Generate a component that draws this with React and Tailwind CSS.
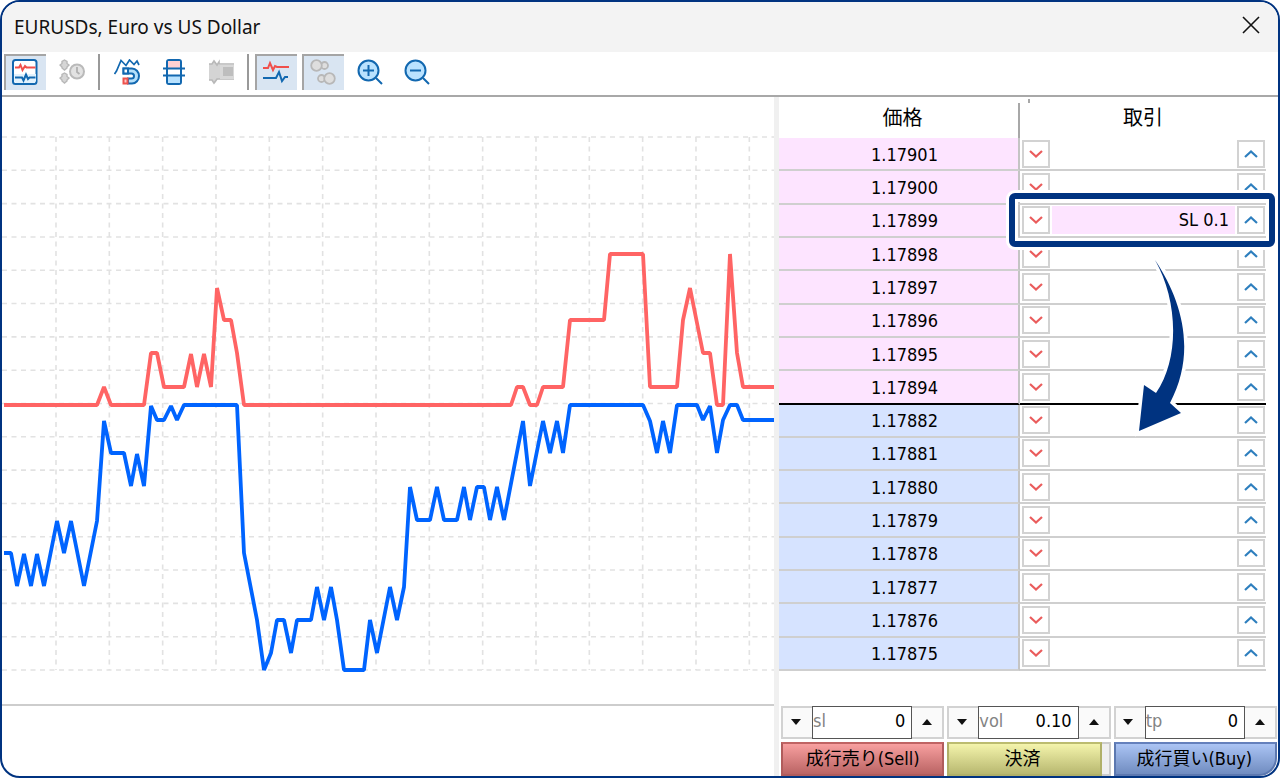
import { useState } from 'react';

const ASKS = ['1.17901', '1.17900', '1.17899', '1.17898', '1.17897', '1.17896', '1.17895', '1.17894'];
const BIDS = ['1.17882', '1.17881', '1.17880', '1.17879', '1.17878', '1.17877', '1.17876', '1.17875'];
const ORDERS = { '1.17899': 'SL 0.1' };

const ASK_LINE =
  '4,405 97,405 104,387 111,405 144,405 151,353 157,353 164,387 184,387 191,354 197,387 204,354 211,387 217,288 224,320 231,320 237,353 244,405 511,405 517,387 523,387 530,405 537,405 543,387 563,387 570,320 604,320 610,254 643,254 650,387 677,387 683,320 690,288 703,353 710,353 717,405 723,405 730,254 737,353 743,387 774,387';
const BID_LINE =
  '4,553 11,553 17,586 24,554 31,586 37,554 44,586 57,521 64,553 71,521 84,586 97,521 104,421 111,453 124,453 131,486 137,454 144,486 151,406 157,420 164,420 171,406 177,420 184,405 237,405 244,553 257,620 264,670 271,653 277,620 284,620 291,653 297,620 311,620 317,587 324,620 331,587 337,620 344,670 364,670 370,620 377,653 390,587 397,620 404,587 410,487 417,520 430,520 437,487 444,520 457,520 464,487 470,520 477,487 484,487 490,520 497,487 504,520 523,421 530,486 543,421 550,453 557,421 563,453 570,405 643,405 650,421 657,453 663,421 670,453 677,405 697,405 703,420 710,406 717,453 723,420 730,405 737,405 743,420 774,420';

const NUM_FONT = "font-['DejaVu_Sans_Condensed','DejaVu_Sans','Noto_Sans_CJK_JP',sans-serif]";

function TickChart() {
  const rows = Array.from({ length: 17 }, (_, i) => 137 + (i * 533) / 16);
  const cols = Array.from({ length: 14 }, (_, i) => 56 + (i * 160) / 3);
  return (
    <svg viewBox="2 97 772 607" preserveAspectRatio="none" className="block h-[607px] w-full" aria-label="Tick chart">
      <g stroke="#e2e2e2" strokeWidth="1.6" strokeDasharray="5 4.5">
        {rows.map((y) => <line key={y} x1="2" x2="774" y1={y} y2={y} />)}
        {cols.map((x) => <line key={x} x1={x} x2={x} y1="137" y2="670" />)}
      </g>
      <g fill="none" strokeWidth="3.8" strokeLinejoin="bevel">
        <polyline points={BID_LINE} stroke="#0064ff" />
        <polyline points={ASK_LINE} stroke="#ff6464" />
      </g>
    </svg>
  );
}

/* Toolbar icons, all on a 26px grid */
function Icon({ children }) {
  return (
    <svg viewBox="0 0 26 26" className="size-[26px]" fill="none" strokeWidth="2" aria-hidden="true">
      {children}
    </svg>
  );
}

const icons = {
  panel: (
    <Icon>
      <rect x="1" y="1" width="23.5" height="24" rx="2.5" fill="#fff" stroke="#1268b0" />
      <path d="M2 15h22v7l-2 2H4l-2-2z" fill="#e2f2fd" />
      <path d="M3 8.5h4L8.5 6l2 5L13 7l1.5 1.5h9" stroke="#f0504c" />
      <path d="M3 18.5h7l1.5 3 2.5-6 2 4.5 1.5-1.5h6" stroke="#1268b0" />
    </Icon>
  ),
  history: (
    <Icon>
      <path
        d="M5.5 1 8 2.5v2L10 6 8 8v1l-2.500 2L3 9V8L1 6l2-1.500v-2zM5.5 14 8 15.5v2l2 1.500-2 2v1L5.5 24 3 22v-1l-2-2 2-1.500v-2z"
        fill="#d6d6d6"
        stroke="#b8b8b8"
        strokeWidth="1.4"
      />
      <circle cx="18" cy="12.5" r="7" fill="#e2e2e2" stroke="#bababa" />
      <path d="M18 8v5l2.5 2" stroke="#b0b0b0" strokeWidth="1.8" />
    </Icon>
  ),
  magnet: (
    <Icon>
      <path d="M.5 15l2-3L7 1.5l5 5L15.5 1 20 5.5 23 2l2 4" stroke="#1268b0" strokeWidth="1.7" />
      <path d="M9.5 9.5H18a7 7.5 0 0 1 0 15h-4v-5h3.5a2.5 2.5 0 0 0 0-5h-8z" fill="#b4dffa" stroke="#1268b0" />
      <path d="M9.5 9.5H14v5H9.5z" fill="#fff" stroke="#1268b0" />
      <path d="M9.5 19.5h4v5h-4z" fill="#ffc8c8" stroke="#ee524c" />
    </Icon>
  ),
  dom: (
    <Icon>
      <rect x="6" y="1" width="14" height="24" rx="2" fill="#fff" stroke="#1268b0" />
      <path d="M7 2h12v7H7z" fill="#ffd0d2" />
      <path d="M7 17h12v7H7z" fill="#b8e2ff" />
      <path d="M2 9.5h22M2 16.5h22" stroke="#1268b0" />
    </Icon>
  ),
  depth: (
    <Icon>
      <path d="M1 5h3l2-3 4 4h2v14h-2l-3 4-3-3H1z" fill="#d4d4d4" />
      <path d="M1 5h3l2-3 3 4 2-3v2h15M1 21h3l2 3 3-4h17" stroke="#b8b8b8" strokeWidth="1.6" />
      <path d="M12 6h14v14H12z" fill="#d8d8d8" />
      <path d="M15 8h10v9H15z" fill="#bebebe" />
    </Icon>
  ),
  ticks: (
    <Icon>
      <path d="M0 9h5l2-5 3 7 2-4 2 1h12" stroke="#f0504c" />
      <path d="M0 19h13l3-6 3 9 3-4h3" stroke="#1268b0" />
    </Icon>
  ),
  volumes: (
    <Icon>
      <g fill="#dedede" stroke="#b8b8b8" strokeWidth="1.8">
        <circle cx="14.5" cy="6.5" r="3.5" />
        <circle cx="6.5" cy="6.5" r="5.3" />
        <circle cx="11.5" cy="19.5" r="3.5" />
        <circle cx="19.5" cy="19.5" r="5.3" />
      </g>
    </Icon>
  ),
  zoomIn: (
    <Icon>
      <circle cx="11.5" cy="11.5" r="10" fill="#b9e2ff" stroke="#1268b0" />
      <path d="M6 11.5h11M11.5 6v11M19 19l6 6" stroke="#1268b0" />
    </Icon>
  ),
  zoomOut: (
    <Icon>
      <circle cx="11.5" cy="11.5" r="10" fill="#b9e2ff" stroke="#1268b0" />
      <path d="M6 11.5h11M19 19l6 6" stroke="#1268b0" />
    </Icon>
  ),
};

function ToolButton({ icon, label, active, disabled, onClick }) {
  return (
    <button
      type="button"
      aria-label={label}
      disabled={disabled}
      onClick={onClick}
      className={`flex h-9 w-[42px] items-center justify-center border-t-2 border-l-2 pr-0.5 pb-0.5 ${active ? 'border-[#a5a5a5] bg-[#d9e5f2]' : 'border-transparent'}`}
    >
      {icons[icon]}
    </button>
  );
}

function Separator() {
  return <div className="mr-px h-9 w-0.5 bg-[#999999]" />;
}

function StepButton({ up, label }) {
  return (
    <button
      type="button"
      aria-label={label}
      className="flex size-7 items-center justify-center border-2 border-[#d2d2d2] bg-white"
    >
      <svg viewBox="0 0 14 8" className="h-2 w-3.5" fill="none" strokeWidth="2.2" aria-hidden="true">
        {up ? <path d="M1 7l6-5.500L13 7" stroke="#2e7fbe" /> : <path d="M1 1l6 5.500L13 1" stroke="#ea5c5c" />}
      </svg>
    </button>
  );
}

/* Frame round the stop-loss row and the arrow that leads to the bid side */
function OrderCallout() {
  return (
    <div className="pointer-events-none absolute -top-3 -right-[9px] -bottom-[11px] -left-[11px] z-10 rounded-md border-6 border-[#003380] shadow-[0_0_0_3px_#fff,inset_0_0_0_3px_#fff]">
      <svg viewBox="1135 255 54 182" className="absolute top-[56px] left-[120px] h-[182px] w-[54px]" aria-hidden="true">
        <path
          d="M1155 260C1182 300 1197 352 1170 403L1181 413 1139 431 1144 385 1156 393C1180 358 1178 300 1155 260z"
          fill="#003380"
          stroke="#fff"
          strokeWidth="7"
          paintOrder="stroke"
        />
      </svg>
    </div>
  );
}

function PriceRow({ price, side, last }) {
  const order = ORDERS[price];
  const line = last ? 'border-b-2 border-b-black' : 'border-b-2 border-b-[#cfcfcf]';
  const fill = side === 'ask' ? 'bg-[#fde4ff]' : 'bg-[#d6e3ff]';
  return (
    <tr>
      <td className={`border-r-2 border-r-[#c4c4c4] p-0 pt-0.5 pl-3 text-center ${line} ${fill}`}>{price}</td>
      <td className={`relative p-0 ${line}`}>
        <div className="flex items-center justify-between pr-px pl-0.5">
          <StepButton label={`Sell at ${price}`} />
          {order && (
            <span className="mx-0.5 h-7 flex-1 bg-[#fde4ff] pt-0.5 pr-1.5 text-right">{order}</span>
          )}
          <StepButton up label={`Buy at ${price}`} />
        </div>
        {order && <OrderCallout />}
      </td>
    </tr>
  );
}

function Triangle({ up }) {
  return (
    <svg viewBox="0 0 10 6" className="h-1.5 w-2.5" aria-hidden="true">
      <path d={up ? 'M5 0l5 6H0z' : 'M0 0h10L5 6z'} fill="#111" />
    </svg>
  );
}

function Spinner({ name, value, step, digits }) {
  const [current, setCurrent] = useState(value);
  const change = (delta) => setCurrent((v) => Math.max(0, Number(v) + delta).toFixed(digits));
  return (
    <div className="flex h-[33px] min-w-0 bg-[#fafafa]">
      <button
        type="button"
        aria-label={`${name} down`}
        onClick={() => change(-step)}
        className="flex w-[31px] shrink-0 items-center justify-center border-2 border-r-0 border-[#d2d2d2] pr-1 pb-0.5"
      >
        <Triangle />
      </button>
      <div className="flex min-w-0 flex-1 items-center border border-[#555555] bg-white pb-1">
        <label htmlFor={name} className="text-[#848484]">{name}</label>
        <input
          id={name}
          value={current}
          onChange={(e) => setCurrent(e.target.value)}
          className="w-full min-w-0 flex-1 pr-1.5 text-right outline-none"
        />
      </div>
      <button
        type="button"
        aria-label={`${name} up`}
        onClick={() => change(step)}
        className="flex w-8 shrink-0 items-center justify-center border-2 border-l-0 border-[#d2d2d2] pb-0.5"
      >
        <Triangle up />
      </button>
    </div>
  );
}

export default function App() {
  const [ticks, setTicks] = useState(true);

  return (
    <div className="flex min-h-screen flex-col overflow-hidden rounded-[20px] border-2 border-[#003380] bg-white font-['Noto_Sans','Noto_Sans_CJK_JP',sans-serif] text-black">
      <header className="flex h-[50px] shrink-0 items-center justify-between bg-[#f3f3f3] pr-[18px] pl-3">
        <h1 className="text-[19px] leading-6 text-[#111]">EURUSDs, Euro vs US Dollar</h1>
        <button type="button" aria-label="Close" className="pb-1">
          <svg viewBox="0 0 18 18" className="size-[18px]" stroke="#111" strokeWidth="1.6" aria-hidden="true">
            <path d="M1 1l16 16M17 1L1 17" />
          </svg>
        </button>
      </header>

      <div className="flex h-[45px] shrink-0 items-center gap-[5px] border-b-2 border-[#a8a8a8] pb-1 pl-0.5">
        <ToolButton icon="panel" label="Depth panel" active />
        <ToolButton icon="history" label="History" disabled />
        <Separator />
        <ToolButton icon="magnet" label="Auto scroll" />
        <ToolButton icon="dom" label="Spread" />
        <ToolButton icon="depth" label="Extended depth" disabled />
        <Separator />
        <ToolButton icon="ticks" label="Ticks" active={ticks} onClick={() => setTicks(!ticks)} />
        <ToolButton icon="volumes" label="Volumes" active />
        <ToolButton icon="zoomIn" label="Zoom in" />
        <ToolButton icon="zoomOut" label="Zoom out" />
      </div>

      <main className="flex flex-1">
        <section className="min-w-0 flex-1">
          <div className="border-b-2 border-[#cdcdcd]">
            <TickChart />
          </div>
        </section>
        <div className="w-[5px] shrink-0 bg-[#f0f0f0]" />

        <section className={`flex w-[499px] shrink-0 flex-col justify-between text-[18px] leading-6 ${NUM_FONT}`}>
          <table className="mr-3 h-[574px] table-fixed border-separate border-spacing-0">
            <thead>
              <tr className="h-[41px] text-[20px]">
                <th className="w-[241px] p-0 pt-1.5 font-normal">
                  <div className="h-[35px] border-r-2 border-[#a8a8a8] pt-[3px] pl-2">価格</div>
                </th>
                <th className="relative p-0 font-normal">
                  <span className="absolute top-0.5 left-2 h-1 w-0.5 bg-[#a8a8a8]" />
                  取引
                </th>
              </tr>
            </thead>
            <tbody>
              {ASKS.map((p, i) => <PriceRow key={p} price={p} side="ask" last={i === ASKS.length - 1} />)}
              {BIDS.map((p) => <PriceRow key={p} price={p} side="bid" />)}
            </tbody>
          </table>

          <div className="grid grid-cols-3 gap-[3px] pr-px pl-0.5">
            <Spinner name="sl" value="0" step={1} digits={0} />
            <Spinner name="vol" value="0.10" step={0.01} digits={2} />
            <Spinner name="tp" value="0" step={1} digits={0} />
            <button type="button" className="h-[34px] border-2 border-[#b05c5c] border-t-[#c06464] bg-linear-to-b from-[#f8a0a0] to-[#ba6464]">
              成行売り(Sell)
            </button>
            <div className="flex">
              <button type="button" className="h-[34px] flex-1 border-2 border-[#b0b068] border-t-[#bcbc70] bg-linear-to-b from-[#f4f4ac] to-[#b8b870] pr-1">
                決済
              </button>
              <div className="w-[9px] border-y-2 border-r-2 border-[#cccccc] bg-[#efefef]" />
            </div>
            <button type="button" className="h-[34px] rounded-br-[18px] border-2 border-[#5c78b0] border-t-[#6480bc] bg-linear-to-b from-[#abc4f4] to-[#708cc0] pr-0.5">
              成行買い(Buy)
            </button>
          </div>
        </section>
      </main>
    </div>
  );
}
